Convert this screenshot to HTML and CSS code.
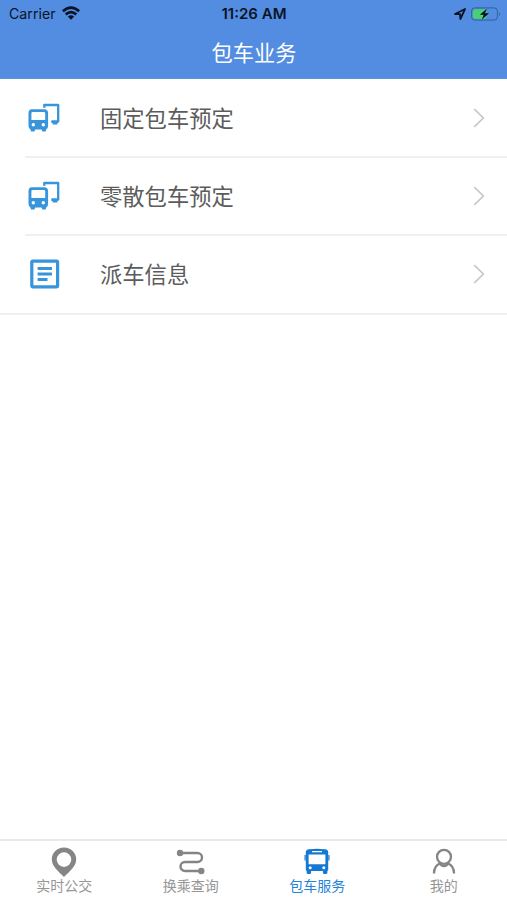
FILE: index.html
```html
<!DOCTYPE html>
<html lang="zh-CN">
<head>
<meta charset="utf-8">
<title>包车业务</title>
<link rel="stylesheet" href="styles.css">
</head>
<body>
<svg width="0" height="0" class="defs">
  <symbol id="buses" viewBox="0 0 32 30">
    <path d="M16.3 4.8V2H30.2V18.6H23.6" fill="none" stroke="currentColor" stroke-width="2.3" stroke-linejoin="round"/>
    <path d="M23.4 17.5H30V20H29.4V21.6H24.6V20H23.4Z" fill="currentColor"/>
    <path fill="currentColor" fill-rule="evenodd" d="M3.8 6.2H16Q20.1 6.2 20.1 10V22.5Q20.1 25.6 18.3 26.2L17.6 28.6H14.4L13.5 26.6H7.3L6.4 28.6H3L2.3 26.2Q.5 25.6 .5 22.5V10Q.5 6.2 3.8 6.2ZM4.8 8.9Q3.4 8.9 3.4 10.3V17H17.2V10.3Q17.2 8.9 15.8 8.9ZM5.3 20.1a1.7 1.7 0 1 0 0 3.4a1.7 1.7 0 1 0 0-3.4ZM15.3 20.1a1.7 1.7 0 1 0 0 3.4a1.7 1.7 0 1 0 0-3.4Z"/>
  </symbol>
  <symbol id="chevron" viewBox="0 0 12 20"><path d="M1.3 1.2 10.3 10 1.3 18.8" fill="none" stroke="currentColor" stroke-width="1.7"/></symbol>
</svg>
<div class="app">
  <header class="header">
    <div class="status">
      <div class="carrier"><span>Carrier</span>
        <svg width="18" height="14" viewBox="0 0 18 14"><g fill="none" stroke="#0a1424" stroke-width="2.7"><path d="M.9 5.2Q9-2 17.1 5.2"/><path d="M3.7 8.4Q9 3.9 14.3 8.4"/></g><path d="M5.8 10.5Q9 7.9 12.2 10.5L9 13.7Z" fill="#0a1424"/></svg>
      </div>
      <div class="time">11:26 AM</div>
      <div class="power">
        <svg width="12" height="12" viewBox="0 0 12 12"><path d="M1 6 11 1 6.4 11 6 6.2Z" fill="none" stroke="#0a1424" stroke-width="1.8" stroke-linejoin="round"/></svg>
        <svg width="30" height="14" viewBox="0 0 30 14"><rect x=".6" y=".9" width="25.8" height="12.2" rx="3.2" fill="none" stroke="#365f99"/><rect x="2" y="2.3" width="13.5" height="9.4" rx="1.8" fill="#49d072"/><path d="M28 5Q30 7 28 9Z" fill="#365f99"/><path d="M15.8 1.8 8.8 7.8H12.7L11 12.4 18 6.2H14Z" fill="#07101c"/></svg>
      </div>
    </div>
    <h1 class="title">包车业务</h1>
  </header>
  <main class="list">
    <div class="row"><svg class="icon"><use href="#buses"/></svg><span class="label">固定包车预定</span><svg class="chevron"><use href="#chevron"/></svg></div>
    <div class="row"><svg class="icon"><use href="#buses"/></svg><span class="label">零散包车预定</span><svg class="chevron"><use href="#chevron"/></svg></div>
    <div class="row"><svg class="icon" viewBox="0 0 32 30"><rect x="3.8" y="2.1" width="25.8" height="25.8" rx=".8" fill="none" stroke="currentColor" stroke-width="3.2"/><path d="M9.6 9.4H24M9.6 15H24M9.6 20.6H19.5" stroke="currentColor" stroke-width="3"/></svg><span class="label">派车信息</span><svg class="chevron"><use href="#chevron"/></svg></div>
  </main>
  <nav class="tabs">
    <div class="tab"><svg width="32" height="32" viewBox="0 0 32 32"><path fill="currentColor" fill-rule="evenodd" d="M16 1.5C9 1.5 3.8 6.7 3.8 13.2C3.8 20.3 10 24.8 16 31C22 24.8 28.2 20.3 28.2 13.2C28.2 6.7 23 1.5 16 1.5ZM16 6.3a7.3 7.3 0 1 1 0 14.6a7.3 7.3 0 1 1 0-14.6Z"/></svg><span>实时公交</span></div>
    <div class="tab"><svg width="32" height="32" viewBox="0 0 32 32"><path d="M5 7H22.5a4.5 4.5 0 0 1 0 9H10a4.5 4.5 0 0 0 0 9H26" fill="none" stroke="currentColor" stroke-width="2.4"/><circle cx="5" cy="7" r="3.2" fill="currentColor"/><circle cx="26.3" cy="25" r="3.2" fill="currentColor"/></svg><span>换乘查询</span></div>
    <div class="tab active"><svg width="32" height="32" viewBox="0 0 32 32"><path fill="currentColor" fill-rule="evenodd" d="M8 3.2Q16 2.4 24 3.2Q27.2 3.6 27.2 6V24.5H26.4V26.5Q26.4 28 24.9 28H23.4Q21.9 28 21.9 26.5V25H10.1V26.5Q10.1 28 8.6 28H7.1Q5.6 28 5.6 26.5V24.5H4.8V6Q4.8 3.6 8 3.2ZM11 5V6.2H21V5ZM7.6 8.6V18.2H24.4V8.6ZM9.2 20.3a1.5 1.5 0 1 0 0 3a1.5 1.5 0 1 0 0-3ZM22.8 20.3a1.5 1.5 0 1 0 0 3a1.5 1.5 0 1 0 0-3Z"/><path d="M4.1 9V14.5M27.9 9V14.5" stroke="currentColor" stroke-width="1.2"/></svg><span>包车服务</span></div>
    <div class="tab"><svg width="32" height="32" viewBox="0 0 32 32"><g fill="none" stroke="currentColor" stroke-width="2.3"><circle cx="16" cy="10.8" r="7"/><path d="M6 27.5C6 22 8.5 18.8 12.2 17.4Q13 20 16 20T19.8 17.4C23.5 18.8 26 22 26 27.5"/></g></svg><span>我的</span></div>
  </nav>
</div>
</body>
</html>
```
FILE: styles.css
```css
* { box-sizing: border-box; }
body { margin: 0; background: #fff; font-family: Inter, "Noto Sans CJK SC", sans-serif; }
.defs { position: absolute; }
svg { display: block; flex: none; }
.app { height: 900px; display: flex; flex-direction: column; overflow: hidden; }
.header { height: 79px; flex: none; background: #538de2; border-bottom: 1px solid #5f94df; }
.status { height: 27px; padding: 0 6px 0 9px; display: grid; grid-template-columns: 1fr auto 1fr; align-items: center; color: #0a1424; line-height: 27px; }
.carrier { display: flex; align-items: center; gap: 6px; }
.carrier span { font-size: 14.2px; }
.carrier svg { margin-bottom: 2px; }
.time { font-weight: 600; font-size: 15px; transform: translateX(-1px); }
.power { display: flex; justify-content: flex-end; align-items: center; gap: 5px; }
.title { margin: 0; padding-left: 1px; color: #fff; font-size: 21.2px; font-weight: 400; line-height: 52px; text-align: center; }
.list { flex: 1; }
.row { height: 78px; padding: 0 22px 0 28px; display: flex; align-items: center; position: relative; color: #3894db; }
.row::after { content: ""; position: absolute; left: 25px; right: 0; bottom: -1px; height: 2px; background: #f0f0f0; }
.icon { width: 32px; height: 30px; }
.label { margin-left: 40px; flex: 1; color: #5c5c5c; font-size: 22.3px; font-weight: 400; line-height: 78px; padding-top: 1px; }
.row:last-child { height: 79px; padding-bottom: 1px; }
.row:last-child::after { left: 0; }
.chevron { width: 12px; height: 20px; color: #c8c8cb; }
.tabs { height: 61px; flex: none; border-top: 2px solid #eaeaea; display: grid; grid-template-columns: repeat(4, 1fr); padding: 5px 0 0 1px; }
.tab { display: flex; flex-direction: column; align-items: center; color: #858585; font-size: 14px; font-weight: 400; line-height: 20px; }
.tab span { margin-top: -2px; color: #969696; }
.tab.active { color: #1479d2; }
.tab.active span { color: #2684d8; }
```
